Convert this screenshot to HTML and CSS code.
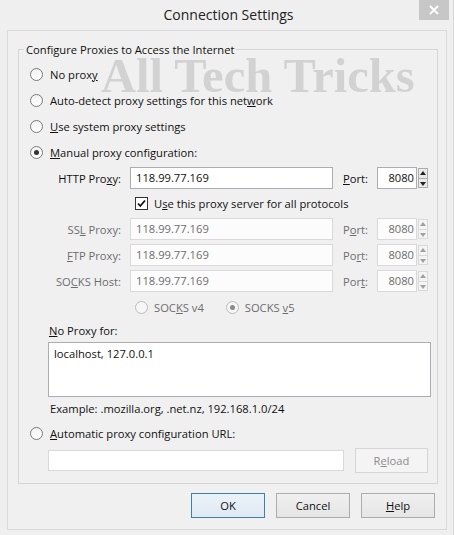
FILE: index.html
```html
<!DOCTYPE html>
<html lang="en">
  <head>
    <meta charset="UTF-8" />
    <title>Connection Settings</title>
    <link rel="stylesheet" href="styles.css">
  </head>
  <body>
    <div class="window">
      <div class="titlebar">
        <span class="title">Connection Settings</span>
        <span class="close">
          <svg width="10" height="10" viewBox="0 0 10 10">
            <path d="M1 1 L9 9 M9 1 L1 9" stroke="#fff" stroke-width="1.8" />
          </svg>
        </span>
      </div>

      <div class="client">
        <div class="watermark">All Tech Tricks</div>

        <fieldset class="group">
          <legend>Configure Proxies to Access the Internet</legend>

          <div class="option"><span class="radio"></span><span>No prox<u>y</u></span></div>
          <div class="option"><span class="radio"></span><span>Auto-detect proxy settings for this net<u>w</u>ork</span></div>
          <div class="option"><span class="radio"></span><span><u>U</u>se system proxy settings</span></div>
          <div class="option"><span class="radio checked"></span><span><u>M</u>anual proxy configuration:</span></div>

          <div class="proxy-row">
            <span class="field-label">HTTP Pro<u>x</u>y:</span>
            <span class="text-input">118.99.77.169</span>
            <span class="port-label"><u>P</u>ort:</span>
            <span class="port-input">8080</span>
            <span class="spinner"><span class="spin up"></span><span class="spin down"></span></span>
          </div>

          <div class="check-row">
            <span class="checkbox">
              <svg width="11" height="11" viewBox="0 0 11 11">
                <path d="M2 5.5 L4.3 8 L9 2.5" fill="none" stroke="#111" stroke-width="1.8" />
              </svg>
            </span>
            <span>U<u>s</u>e this proxy server for all protocols</span>
          </div>

          <div class="proxy-row disabled">
            <span class="field-label">SS<u>L</u> Proxy:</span>
            <span class="text-input">118.99.77.169</span>
            <span class="port-label">P<u>o</u>rt:</span>
            <span class="port-input">8080</span>
            <span class="spinner"><span class="spin up"></span><span class="spin down"></span></span>
          </div>

          <div class="proxy-row disabled">
            <span class="field-label"><u>F</u>TP Proxy:</span>
            <span class="text-input">118.99.77.169</span>
            <span class="port-label">Po<u>r</u>t:</span>
            <span class="port-input">8080</span>
            <span class="spinner"><span class="spin up"></span><span class="spin down"></span></span>
          </div>

          <div class="proxy-row disabled">
            <span class="field-label">SO<u>C</u>KS Host:</span>
            <span class="text-input">118.99.77.169</span>
            <span class="port-label">Por<u>t</u>:</span>
            <span class="port-input">8080</span>
            <span class="spinner"><span class="spin up"></span><span class="spin down"></span></span>
          </div>

          <div class="socks-row disabled">
            <span class="radio"></span><span class="socks-text">SOC<u>K</u>S v4</span>
            <span class="radio checked"></span><span>SOCKS <u>v</u>5</span>
          </div>

          <div class="no-proxy-label"><u>N</u>o Proxy for:</div>
          <div class="textarea">localhost, 127.0.0.1</div>
          <div class="example">Example: .mozilla.org, .net.nz, 192.168.1.0/24</div>

          <div class="option auto"><span class="radio"></span><span><u>A</u>utomatic proxy configuration URL:</span></div>

          <div class="url-row">
            <span class="url-input"></span>
            <span class="button reload">R<u>e</u>load</span>
          </div>
        </fieldset>

        <div class="buttons">
          <span class="button default">OK</span>
          <span class="button">Cancel</span>
          <span class="button"><u>H</u>elp</span>
        </div>
      </div>
    </div>
  </body>
</html>
```

FILE: styles.css
```css
body {
  margin: 0;
  padding: 0;
  background-color: #efefef;
  font-family: "Open Sans", "Noto Sans", sans-serif;
  font-size: 11.2px;
  color: #111;
}

.window {
  width: 454px;
  height: 535px;
  box-sizing: border-box;
  border-right: 1px solid #d6d6d6;
}

.titlebar {
  position: relative;
  height: 30px;
  text-align: center;
}

.title {
  display: inline-block;
  font-size: 14px;
  line-height: 30px;
  color: #222;
  margin-left: 4px;
}

.close {
  position: absolute;
  top: 0;
  right: 4px;
  width: 30px;
  height: 20px;
  background-color: #c7c7c7;
  display: flex;
  align-items: center;
  justify-content: center;
}

.client {
  position: relative;
  margin-left: 7px;
  width: 440px;
  height: 500px;
  box-sizing: border-box;
  border: 1px solid #dadada;
  background-color: #f0f0f0;
}

/* watermark stamped over the dialog */
.watermark {
  position: absolute;
  top: 27px;
  left: 93px;
  font-family: "Liberation Serif", serif;
  font-weight: bold;
  font-size: 48.5px;
  line-height: 36px;
  color: #d2d2d2;
  white-space: nowrap;
}

.group {
  position: relative;
  margin: 10px 0 0 10px;
  width: 420px;
  height: 443px;
  box-sizing: border-box;
  border: 1px solid #d5d5d5;
  padding: 4px 5px 0 11px;
}

.group legend {
  margin-left: -6px;
  padding: 0 2px;
  line-height: 16px;
  position: relative;
  top: 1px;
}

.option {
  display: flex;
  align-items: center;
  height: 26px;
}

.option.auto {
  height: 24px;
}

.radio {
  display: inline-block;
  width: 11px;
  height: 11px;
  border: 1px solid #7a7a7a;
  border-radius: 50%;
  background: linear-gradient(#f2f2f2, #ffffff);
  margin-right: 7px;
  position: relative;
  flex-shrink: 0;
}

.radio.checked::after {
  content: "";
  position: absolute;
  left: 3px;
  top: 3px;
  width: 5px;
  height: 5px;
  border-radius: 50%;
  background-color: #333;
}

.proxy-row {
  display: flex;
  align-items: center;
  height: 26px;
}

.field-label {
  width: 91px;
  text-align: right;
  margin-right: 9px;
}

.text-input {
  width: 203px;
  height: 22px;
  box-sizing: border-box;
  border: 1px solid #abadb3;
  background-color: #fff;
  padding-left: 5px;
  line-height: 20px;
}

.port-label {
  width: 34px;
  margin-left: 10px;
}

.port-input {
  width: 40px;
  height: 22px;
  box-sizing: border-box;
  border: 1px solid #abadb3;
  background-color: #fff;
  padding-right: 2px;
  text-align: right;
  line-height: 20px;
}

.spinner {
  display: flex;
  flex-direction: column;
  width: 10px;
  height: 20px;
  margin-left: 1px;
}

.spin {
  flex: 1;
  box-sizing: border-box;
  border: 1px solid #acacac;
  background-color: #eaeaea;
  position: relative;
}

.spin.up {
  border-bottom: none;
}

.spin::after {
  content: "";
  position: absolute;
  left: 1px;
  border-left: 3px solid transparent;
  border-right: 3px solid transparent;
}

.spin.up::after {
  top: 2px;
  border-bottom: 4px solid #222;
}

.spin.down::after {
  top: 3px;
  border-top: 4px solid #222;
}

.disabled {
  color: #6d6d6d;
}

.disabled .text-input,
.disabled .port-input {
  border-color: #d9d9d9;
  background-color: #fcfcfc;
}

.disabled .spin {
  border-color: #d9d9d9;
  background-color: #f4f4f4;
}

.disabled .spin.up::after {
  border-bottom-color: #a0a0a0;
}

.disabled .spin.down::after {
  border-top-color: #a0a0a0;
}

.check-row {
  display: flex;
  align-items: center;
  height: 25px;
  padding-left: 105px;
}

.checkbox {
  width: 11px;
  height: 11px;
  border: 1px solid #333;
  background-color: #fff;
  margin-right: 6px;
  display: flex;
  align-items: center;
  justify-content: center;
}

.socks-row {
  display: flex;
  align-items: center;
  height: 26px;
  padding-left: 105px;
}

.socks-row .radio {
  border-color: #bcbcbc;
  background: #f6f6f6;
  margin-right: 6px;
}

.socks-row .radio.checked::after {
  background-color: #8a8a8a;
}

.socks-text {
  margin-right: 22px;
}

.no-proxy-label {
  height: 22px;
  line-height: 22px;
  padding-left: 19px;
}

.textarea {
  margin-left: 18px;
  width: 383px;
  height: 55px;
  box-sizing: border-box;
  border: 1px solid #abadb3;
  background-color: #fff;
  padding: 3px 5px;
  line-height: 16px;
}

.example {
  height: 24px;
  line-height: 24px;
  padding-left: 20px;
}

.url-row {
  display: flex;
  align-items: center;
  height: 31px;
  padding-left: 18px;
}

.url-input {
  width: 296px;
  height: 21px;
  box-sizing: border-box;
  border: 1px solid #d9d9d9;
  background-color: #fff;
}

.button {
  display: inline-flex;
  align-items: center;
  justify-content: center;
  width: 74px;
  height: 25px;
  box-sizing: border-box;
  border: 1px solid #acacac;
  background: linear-gradient(#f0f0f0, #e5e5e5);
  color: #111;
}

.button.reload {
  margin-left: 11px;
  width: 73px;
  border-color: #d5d5d5;
  background: #f4f4f4;
  color: #8d8d8d;
}

.button.default {
  border-color: #3c7fb1;
  background: linear-gradient(#eaf2f9, #e0e9f2);
}

.buttons {
  display: flex;
  justify-content: flex-end;
  gap: 11px;
  margin-top: 9px;
  padding-right: 11px;
}
```
